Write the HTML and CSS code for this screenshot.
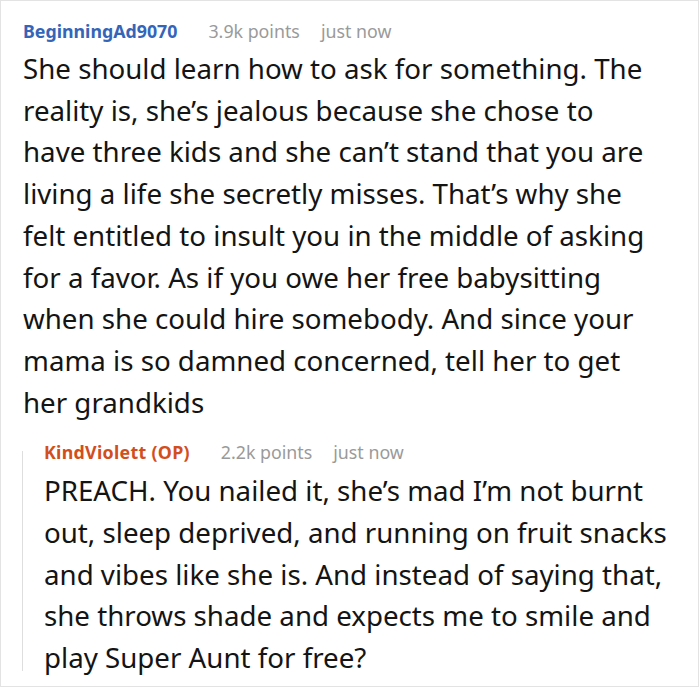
FILE: index.html
```html
<!DOCTYPE html>
<html>
<head>
<meta charset="utf-8">
<link rel="stylesheet" href="styles.css">
</head>
<body>
<div class="card">
  <div class="comment">
    <div class="meta">
      <span class="user user-blue">BeginningAd9070</span>
      <span class="info points">3.9k points</span>
      <span class="info">just now</span>
    </div>
    <p class="text text-main">She should learn how to ask for something. The reality is, she’s jealous because she chose to have three kids and she can’t stand that you are living a life she secretly misses. That’s why she felt entitled to insult you in the middle of asking for a favor. As if you owe her free babysitting when she could hire somebody. And since your mama is so damned concerned, tell her to get her grandkids</p>
    <div class="reply">
      <div class="meta">
        <span class="user user-orange">KindViolett (OP)</span>
        <span class="info points">2.2k points</span>
        <span class="info">just now</span>
      </div>
      <p class="text">PREACH. You nailed it, she’s mad I’m not burnt out, sleep deprived, and running on fruit snacks and vibes like she is. And instead of saying that, she throws shade and expects me to smile and play Super Aunt for free?</p>
    </div>
  </div>
</div>
</body>
</html>
```
FILE: styles.css
```css
html, body {
  margin: 0;
  padding: 0;
  background: #ffffff;
}
body {
  font-family: "Noto Sans", "Open Sans", sans-serif;
}
.card {
  box-sizing: border-box;
  width: 699px;
  height: 687px;
  border: 1px solid #e3e3e3;
  padding: 18px 20px 0 22px;
  overflow: hidden;
}
.meta {
  display: flex;
  align-items: center;
  font-size: 17.8px;
  line-height: 24px;
  height: 24px;
}
.user {
  font-weight: 700;
  margin-right: 31px;
}
.points {
  margin-right: 21px;
}
.user-blue {
  color: #3565b9;
}
.user-orange {
  color: #d24f1d;
  letter-spacing: 0.3px;
}
.info {
  color: #9a9a9a;
}
.text {
  margin: 5px 0 0 0;
  font-size: 27.7px;
  line-height: 41.7px;
  color: #141414;
}
.text-main {
  margin-right: 26px;
}
.reply {
  position: relative;
  margin-top: 17px;
  margin-left: -1px;
  padding-left: 22px;
}
.reply::before {
  content: "";
  position: absolute;
  left: 0;
  top: 11px;
  bottom: 8px;
  width: 1px;
  background: #dedede;
}
.reply .text {
  margin-top: 6px;
}
```
